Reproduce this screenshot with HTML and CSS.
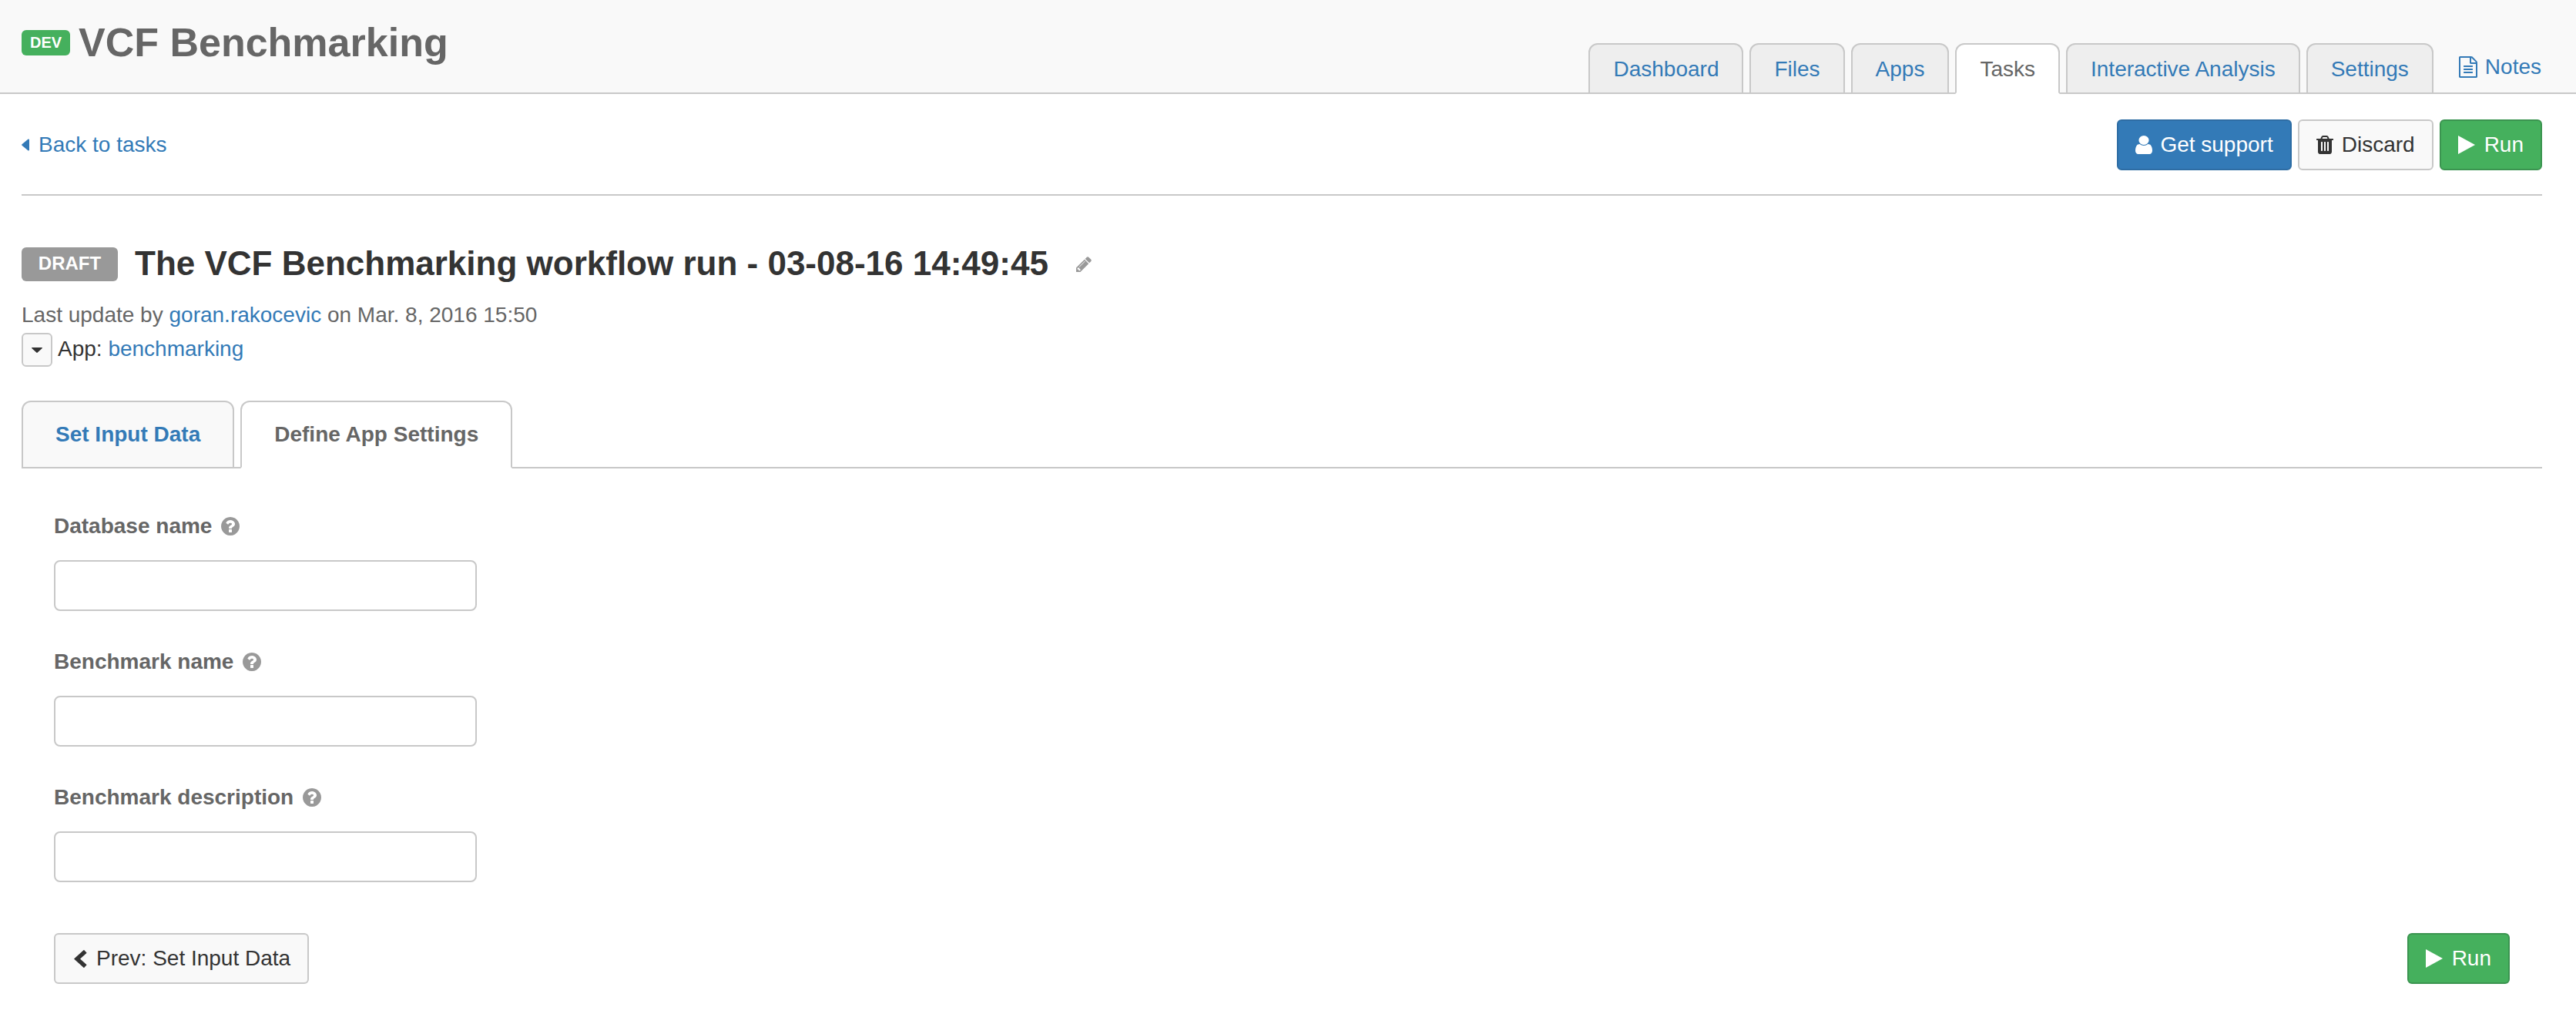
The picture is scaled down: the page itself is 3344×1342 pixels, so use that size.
FILE: index.html
```html
<!DOCTYPE html>
<html lang="en">
<head>
<meta charset="utf-8">
<title>VCF Benchmarking</title>
<link rel="stylesheet" href="styles.css">
</head>
<body>
<header class="topbar">
  <div class="brand">
    <span class="badge-dev">DEV</span>
    <h1 class="project-name">VCF Benchmarking</h1>
  </div>
  <nav class="main-nav">
    <a class="main-tab" href="#">Dashboard</a>
    <a class="main-tab" href="#">Files</a>
    <a class="main-tab" href="#">Apps</a>
    <a class="main-tab main-tab-active" href="#">Tasks</a>
    <a class="main-tab" href="#">Interactive Analysis</a>
    <a class="main-tab" href="#">Settings</a>
    <a class="notes-link" href="#">
      <svg class="icon-notes" viewBox="128 0 1536 1792"><path fill="currentColor" d="M1596 380q28 28 48 76t20 88v1152q0 40-28 68t-68 28h-1344q-40 0-68-28t-28-68v-1600q0-40 28-68t68-28h896q40 0 88 20t76 48zm-444-244v376h376q-10-29-22-41l-313-313q-12-12-41-22zm384 1528v-1024h-416q-40 0-68-28t-28-68v-416h-768v1536h1280zm-1024-864q0-14 9-23t23-9h704q14 0 23 9t9 23v64q0 14-9 23t-23 9h-704q-14 0-23-9t-9-23v-64zm736 224q14 0 23 9t9 23v64q0 14-9 23t-23 9h-704q-14 0-23-9t-9-23v-64q0-14 9-23t23-9h704zm0 256q14 0 23 9t9 23v64q0 14-9 23t-23 9h-704q-14 0-23-9t-9-23v-64q0-14 9-23t23-9h704z"/></svg>
      Notes
    </a>
  </nav>
</header>

<main class="page">
  <div class="toolbar">
    <a class="back-link" href="#">
      <svg class="icon-caret-left" viewBox="0 0 10 16"><path fill="currentColor" d="M9 0.5a1 1 0 0 1 1 1v13a1 1 0 0 1-1.7.7L0.5 8.7a1 1 0 0 1 0-1.4L8.3 0.8A1 1 0 0 1 9 0.5z"/></svg>
      Back to tasks
    </a>
    <div class="toolbar-actions">
      <button class="btn btn-primary">
        <svg class="icon-user" viewBox="256 128 1280 1536" preserveAspectRatio="none"><path fill="currentColor" d="M1536 1399q0 109-62.5 187t-150.5 78h-854q-88 0-150.5-78t-62.5-187q0-85 8.5-160.5t31.5-152 58.5-131 94-89 134.5-34.5q131 128 313 128t313-128q76 0 134.5 34.5t94 89 58.5 131 31.5 152 8.5 160.5zm-256-887q0 159-112.5 271.5t-271.5 112.5-271.5-112.5-112.5-271.5 112.5-271.5 271.5-112.5 271.5 112.5 112.5 271.5z"/></svg>
        Get support
      </button>
      <button class="btn btn-default">
        <svg class="icon-trash" viewBox="192 128 1408 1536"><path fill="currentColor" d="M704 1376v-704q0-14-9-23t-23-9h-64q-14 0-23 9t-9 23v704q0 14 9 23t23 9h64q14 0 23-9t9-23zm256 0v-704q0-14-9-23t-23-9h-64q-14 0-23 9t-9 23v704q0 14 9 23t23 9h64q14 0 23-9t9-23zm256 0v-704q0-14-9-23t-23-9h-64q-14 0-23 9t-9 23v704q0 14 9 23t23 9h64q14 0 23-9t9-23zm-544-992h448l-48-117q-7-9-17-11h-317q-10 2-17 11zm928 32v64q0 14-9 23t-23 9h-96v948q0 83-47 143.5t-113 60.5h-832q-66 0-113-58.5t-47-141.5v-952h-96q-14 0-23-9t-9-23v-64q0-14 9-23t23-9h309l70-167q15-37 54-63t79-26h320q40 0 79 26t54 63l70 167h309q14 0 23 9t9 23z"/></svg>
        Discard
      </button>
      <button class="btn btn-success">
        <svg class="icon-play" viewBox="0 0 22 24"><path fill="currentColor" d="M0 0L22 12L0 24z"/></svg>
        Run
      </button>
    </div>
  </div>

  <div class="title-row">
    <span class="badge-draft">DRAFT</span>
    <h2 class="task-title">The VCF Benchmarking workflow run - 03-08-16 14:49:45</h2>
    <svg class="icon-pencil" viewBox="128 128 1536 1536"><path fill="currentColor" d="M491 1536l91-91-235-235-91 91v107h128v128h107zm523-928q0-22-22-22-10 0-17 7l-542 542q-7 7-7 17 0 22 22 22 10 0 17-7l542-542q7-7 7-17zm-54-192l416 416-832 832h-416v-416zm683 96q0 53-37 90l-166 166-416-416 166-165q36-38 90-38 53 0 91 38l235 234q37 39 37 91z"/></svg>
  </div>

  <p class="meta">Last update by <a class="link" href="#">goran.rakocevic</a> on Mar. 8, 2016 15:50</p>
  <div class="app-row">
    <button class="btn-toggle">
      <svg class="icon-caret-down" viewBox="0 0 14 7"><path fill="currentColor" d="M0.6 0h12.8a.6.6 0 0 1 .4 1L7.4 6.8a.6.6 0 0 1-.8 0L.2 1a.6.6 0 0 1 .4-1z"/></svg>
    </button>
    <span class="app-text">App: <a class="link" href="#">benchmarking</a></span>
  </div>

  <div class="step-tabs">
    <a class="step-tab" href="#">Set Input Data</a>
    <a class="step-tab step-tab-active" href="#">Define App Settings</a>
  </div>

  <form class="settings-form">
    <div class="field">
      <label class="field-label">Database name
        <svg class="icon-help" viewBox="128 128 1536 1536"><path fill="currentColor" d="M1024 1376v-192q0-14-9-23t-23-9h-192q-14 0-23 9t-9 23v192q0 14 9 23t23 9h192q14 0 23-9t9-23zm256-672q0-88-55.5-163t-138.5-116-170-41q-243 0-371 213-15 24 8 42l132 100q7 6 19 6 16 0 25-12 53-68 86-92 34-24 86-24 48 0 85.5 26t37.5 59q0 38-20 61t-68 45q-63 28-115.5 86.5t-52.5 125.5v36q0 14 9 23t23 9h192q14 0 23-9t9-23q0-19 21.5-49.5t54.5-49.5q32-18 49-28.5t46-35 44.5-48 28-60.5 12.5-81zm384 192q0 209-103 385.5t-279.5 279.5-385.5 103-385.5-103-279.5-279.5-103-385.5 103-385.5 279.5-279.5 385.5-103 385.5 103 279.5 279.5 103 385.5z"/></svg>
      </label>
      <input class="text-input" type="text">
    </div>
    <div class="field">
      <label class="field-label">Benchmark name
        <svg class="icon-help" viewBox="128 128 1536 1536"><path fill="currentColor" d="M1024 1376v-192q0-14-9-23t-23-9h-192q-14 0-23 9t-9 23v192q0 14 9 23t23 9h192q14 0 23-9t9-23zm256-672q0-88-55.5-163t-138.5-116-170-41q-243 0-371 213-15 24 8 42l132 100q7 6 19 6 16 0 25-12 53-68 86-92 34-24 86-24 48 0 85.5 26t37.5 59q0 38-20 61t-68 45q-63 28-115.5 86.5t-52.5 125.5v36q0 14 9 23t23 9h192q14 0 23-9t9-23q0-19 21.5-49.5t54.5-49.5q32-18 49-28.5t46-35 44.5-48 28-60.5 12.5-81zm384 192q0 209-103 385.5t-279.5 279.5-385.5 103-385.5-103-279.5-279.5-103-385.5 103-385.5 279.5-279.5 385.5-103 385.5 103 279.5 279.5 103 385.5z"/></svg>
      </label>
      <input class="text-input" type="text">
    </div>
    <div class="field">
      <label class="field-label">Benchmark description
        <svg class="icon-help" viewBox="128 128 1536 1536"><path fill="currentColor" d="M1024 1376v-192q0-14-9-23t-23-9h-192q-14 0-23 9t-9 23v192q0 14 9 23t23 9h192q14 0 23-9t9-23zm256-672q0-88-55.5-163t-138.5-116-170-41q-243 0-371 213-15 24 8 42l132 100q7 6 19 6 16 0 25-12 53-68 86-92 34-24 86-24 48 0 85.5 26t37.5 59q0 38-20 61t-68 45q-63 28-115.5 86.5t-52.5 125.5v36q0 14 9 23t23 9h192q14 0 23-9t9-23q0-19 21.5-49.5t54.5-49.5q32-18 49-28.5t46-35 44.5-48 28-60.5 12.5-81zm384 192q0 209-103 385.5t-279.5 279.5-385.5 103-385.5-103-279.5-279.5-103-385.5 103-385.5 279.5-279.5 385.5-103 385.5 103 279.5 279.5 103 385.5z"/></svg>
      </label>
      <input class="text-input" type="text">
    </div>
    <div class="form-actions">
      <button class="btn btn-default btn-prev" type="button">
        <svg class="icon-chevron" viewBox="0 0 17 23"><path fill="none" stroke="currentColor" stroke-width="5.5" d="M14.8 1.8L4 11.5L14.8 21.2"/></svg>
        Prev: Set Input Data
      </button>
      <button class="btn btn-success" type="button">
        <svg class="icon-play" viewBox="0 0 22 24"><path fill="currentColor" d="M0 0L22 12L0 24z"/></svg>
        Run
      </button>
    </div>
  </form>
</main>
</body>
</html>
```

FILE: styles.css
```css
* { box-sizing: border-box; }

html, body { margin: 0; padding: 0; background: #fff; }

body {
  font-family: "Liberation Sans", Arial, sans-serif;
  font-size: 28px;
  line-height: 40px;
  color: #666;
  overflow: hidden;
}

a { text-decoration: none; }

svg { display: block; flex: none; }

/* Top bar */
.topbar {
  display: flex;
  justify-content: space-between;
  height: 122px;
  padding: 0 45px 0 28px;
  background: #f9f9f9;
  border-bottom: 2px solid #c8c8c8;
}

.brand { display: flex; align-items: flex-start; gap: 11px; padding-top: 25px; }

.badge-dev {
  margin-top: 14px;
  width: 63px;
  height: 33px;
  border-radius: 6px;
  background: #45b05d;
  color: #fff;
  font-size: 20px;
  font-weight: 700;
  line-height: 32px;
  text-align: center;
}

.project-name {
  margin: 0;
  font-size: 52px;
  line-height: 60px;
  font-weight: 700;
  color: #666;
}

.main-nav { display: flex; align-items: flex-end; gap: 8px; margin-bottom: -2px; }

.main-tab {
  height: 66px;
  padding: 12px 30px 0;
  background: #eee;
  border: 2px solid #c8c8c8;
  border-radius: 12px 12px 0 0;
  color: #337ab7;
}

.main-tab-active {
  background: #fff;
  border-bottom-color: #fff;
  color: #666;
}

.notes-link {
  display: flex;
  align-items: center;
  gap: 10px;
  height: 66px;
  padding: 0 0 4px;
  margin-left: 25px;
  color: #337ab7;
}

/* Page body */
.page { padding: 0 44px 0 28px; }

.toolbar {
  display: flex;
  justify-content: space-between;
  align-items: center;
  height: 132px;
  padding: 2px 0 0;
  border-bottom: 2px solid #c8c8c8;
}

.back-link { display: flex; align-items: center; gap: 12px; color: #337ab7; }

.toolbar-actions { display: flex; gap: 8px; }

.btn {
  display: flex;
  align-items: center;
  gap: 11px;
  height: 66px;
  padding: 0 22px;
  border: 2px solid;
  border-radius: 6px;
  font: inherit;
  line-height: 40px;
}

.btn-primary { background: #337ab7; border-color: #2e6da4; color: #fff; gap: 10px; }
.btn-default { background: #f9f9f9; border-color: #c8c8c8; color: #333; }
.btn-success { background: #45b05d; border-color: #3b9450; color: #fff; gap: 12px; }
.btn-prev { padding: 0 22px 0 24px; gap: 12px; }

.icon-user { width: 22px; height: 24px; }
.icon-trash { width: 22px; height: 24px; }
.icon-play { width: 22px; height: 24px; }
.icon-notes { width: 24px; height: 28px; }
.icon-chevron { width: 17px; height: 23px; }
.icon-caret-left { width: 10px; height: 16px; }
.icon-caret-down { width: 14px; height: 7px; }
.icon-pencil { width: 20px; height: 20px; margin-left: 36px; color: #999; }
.icon-help { width: 24px; height: 24px; margin-left: 12px; color: #999; }

/* Task heading */
.title-row { display: flex; align-items: center; margin-top: 67px; }

.badge-draft {
  width: 125px;
  height: 44px;
  border-radius: 6px;
  background: #999;
  color: #fff;
  font-size: 24px;
  font-weight: 700;
  line-height: 42px;
  text-align: center;
}

.task-title {
  margin: 0 0 0 22px;
  padding-bottom: 3px;
  font-size: 44px;
  line-height: 41px;
  font-weight: 700;
  color: #333;
}

.meta { margin: 24px 0 0; color: #666; }

.link { color: #337ab7; }

.app-row { display: flex; align-items: center; gap: 7px; margin-top: 3px; }

.btn-toggle {
  display: flex;
  align-items: center;
  justify-content: center;
  width: 40px;
  height: 44px;
  padding: 0;
  background: #f9f9f9;
  border: 2px solid #c8c8c8;
  border-radius: 6px;
  color: #333;
}

.app-text { padding-bottom: 3px; color: #333; }

/* Step tabs */
.step-tabs {
  display: flex;
  gap: 8px;
  margin-top: 44px;
  height: 88px;
  border-bottom: 2px solid #c8c8c8;
}

.step-tab {
  height: 88px;
  padding: 22px 42px 0;
  background: #f9f9f9;
  border: 2px solid #c8c8c8;
  border-radius: 12px 12px 0 0;
  font-weight: 700;
  color: #337ab7;
}

.step-tab-active {
  background: #fff;
  border-bottom-color: #fff;
  color: #666;
}

/* Form */
.settings-form { padding: 55px 42px 0; }

.field { margin-bottom: 46px; }

.field-label {
  display: flex;
  align-items: center;
  height: 40px;
  margin-bottom: 24px;
  font-weight: 700;
  color: #666;
}

.text-input {
  display: block;
  width: 549px;
  height: 66px;
  background: #fff;
  border: 2px solid #c8c8c8;
  border-radius: 8px;
  font: inherit;
}

.form-actions {
  display: flex;
  justify-content: space-between;
  margin-top: 66px;
}
```
